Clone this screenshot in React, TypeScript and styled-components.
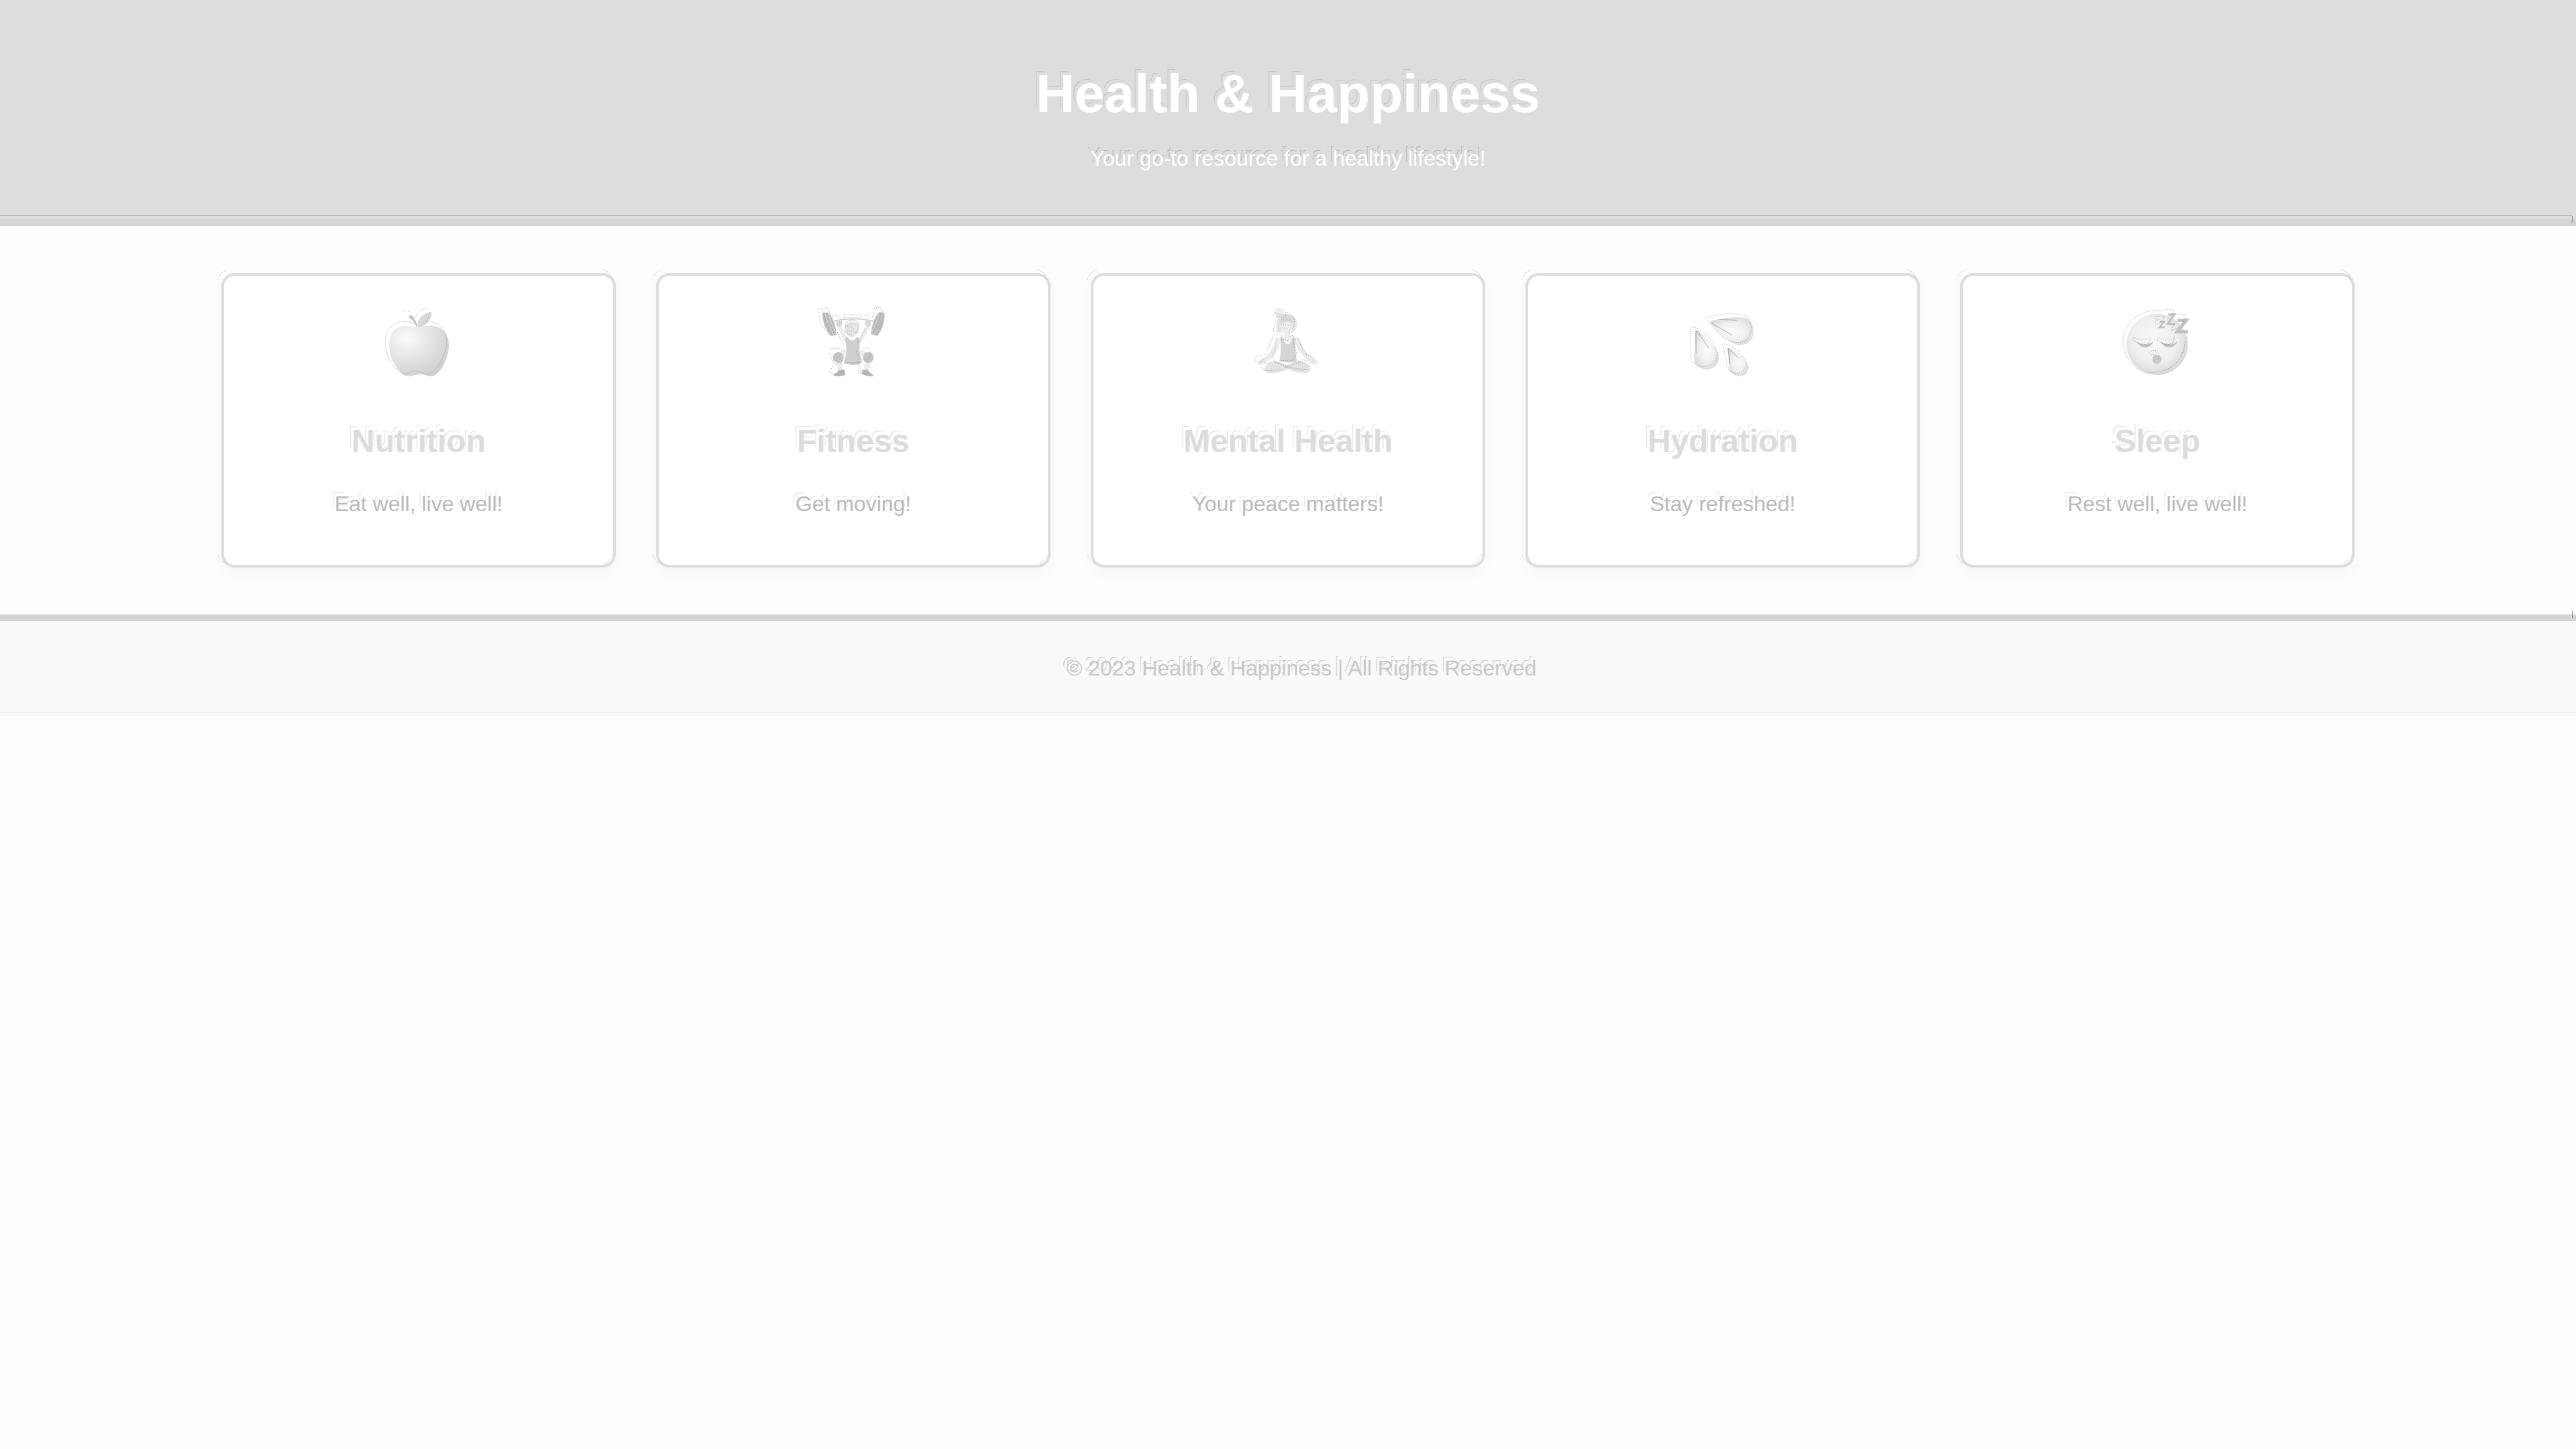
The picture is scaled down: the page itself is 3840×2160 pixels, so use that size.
import React from "react";
import styled, { createGlobalStyle, css } from "styled-components";

const GlobalStyle = createGlobalStyle`
  *, *::before, *::after { box-sizing: border-box; }
  body {
    margin: 0;
    background: #fdfdfd;
    color: #bababa;
    font-family: "Liberation Sans", Arial, sans-serif;
    font-size: 32px;
    line-height: 37px;
    text-align: center;
  }
`;

/* A thin contour up and to the left of the letters. */
const contour = (ground: string, line: string) => css`
  text-shadow: -4px -5px 0 ${ground}, -5px -6px 0 ${line};
`;

/* The short upright mark at the right end of a band's rule. */
const endMark = css`
  position: relative;
  &::after {
    content: "";
    position: absolute;
    right: 5px;
    width: 1px;
    height: 10px;
    background: #858585;
  }
`;

const Header = styled.header`
  ${endMark}
  padding: 94px 40px 72px;
  border-bottom: 10px solid #d4d4d4;
  background: linear-gradient(#adadad, #adadad) 0 calc(100% - 5px) / calc(100% - 6px) 1px no-repeat #ddd;
  background-origin: padding-box;
  color: #fff;
  &::after { bottom: -5px; }
`;

const Title = styled.h1`
  margin: 0 0 32px;
  font-size: 80px;
  line-height: 92px;
  ${contour("#ddd", "#c6c6c6")}
`;

const Tagline = styled.p`
  margin: 0;
  ${contour("#ddd", "#b8b8b8")}
`;

const Cards = styled.main`
  display: grid;
  grid-template-columns: repeat(5, minmax(0, 588px));
  justify-content: center;
  gap: 60px;
  padding: 70px 60px;
`;

const Card = styled.section`
  position: relative;
  padding: 40px;
  border: 4px solid #ddd;
  border-radius: 20px;
  background: #fff;
  box-shadow: 0 8px 20px rgba(0, 0, 0, 0.03);
  &::before {
    content: "";
    position: absolute;
    inset: -10px 0 0 -10px;
    border: 1px dotted #b4b4b4;
    border-radius: 20px;
    --c: linear-gradient(#000, #000);
    mask: var(--c) 0 0 / 16px 16px no-repeat, var(--c) 100% 0 / 16px 16px no-repeat,
      var(--c) 0 100% / 16px 16px no-repeat, var(--c) 100% 100% / 16px 16px no-repeat;
  }
`;

const Icon = styled.svg`
  display: block;
  width: 100px;
  height: 100px;
  margin: 11px auto 68px;
  overflow: visible;
`;

const CardTitle = styled.h2`
  margin: 0 0 48px;
  color: #dcdcdc;
  font-size: 48px;
  line-height: 55px;
  ${contour("#fff", "#dedede")}
`;

const CardText = styled.p`
  margin: 0 0 32px;
  ${contour("#fff", "#e2e2e2")}
`;

const Footer = styled.footer`
  ${endMark}
  padding: 52px 0 52px 40px;
  border-top: 10px solid #d4d4d4;
  background: linear-gradient(#f0f0f0, #f0f0f0) 0 calc(100% - 4px) / 100% 1px no-repeat #f9f9f9;
  color: #c8c8c8;
  ${contour("#f9f9f9", "#cacaca")}
  &::after { top: -15px; }
`;

const FooterText = styled.p`
  margin: 0;
`;

const ghost = { fill: "none", stroke: "#8c8c8c", strokeWidth: 3, strokeDasharray: "3 6" };

const Apple = () => (
  <Icon viewBox="102 66 300 300" aria-hidden="true">
    <defs>
      <radialGradient id="apple" cx="30%" cy="25%" r="90%">
        <stop offset="0" stopColor="#fafafa" />
        <stop offset="0.45" stopColor="#e4e4e4" />
        <stop offset="1" stopColor="#cacaca" />
      </radialGradient>
    </defs>
    <path d="M253 146C285 133 325 133 350 148C380 166 390 200 387 235C383 285 354 344 320 360C302 368 278 352 257 353C236 353 212 368 192 360C158 343 124 285 120 232C118 192 130 158 160 144C189 132 224 139 253 146Z" fill="url(#apple)" />
    <path d="M244 143C236 125 225 111 211 101C204 91 218 86 224 94C237 109 245 127 248 144Z" fill="#c2c2c2" />
    <path d="M247 142C245 112 265 80 310 75C315 108 286 140 247 146Z" fill="#d8d8d8" />
    <g {...ghost}>
      <path d="M232 127C202 115 150 113 128 140C108 161 102 185 104 222C108 280 144 337 183 352C204 354 221 340 239 339C258 339 278 355 301 350C344 326 372 267 377 219C378 173 363 126 307 119" />
      <path d="M190 76C187 69 204 67 210 78M217 119L224 126M236 102C248 77 265 59 299 59M301 78C299 95 291 110 280 118L291 121" />
    </g>
  </Icon>
);

const Lifter = () => (
  <Icon viewBox="126 66 300 300" aria-hidden="true">
    <path d="M190 116Q276 96 365 116" fill="none" stroke="#d2d2d2" strokeWidth="6" />
    <path d="M211 135L249 208M346 135L303 208" stroke="#ececec" strokeWidth="19" strokeLinecap="round" />
    <path d="M138 79L163 78C185 100 200 140 201 178L178 183C151 161 139 120 138 79Z" fill="#bcbcbc" />
    <path d="M415 79L390 76C372 97 357 139 355 174L382 182C407 157 418 116 415 79Z" fill="#bcbcbc" />
    <path d="M151 83C158 116 169 149 189 177M165 81C173 115 185 145 198 168M403 81C397 116 384 152 367 177M389 80C385 113 372 143 359 162" fill="none" stroke="#dedede" strokeWidth="3" />
    <path d="M246 252L210 273L219 337M306 252L342 273L335 337" fill="none" stroke="#eeeeee" strokeWidth="25" strokeLinejoin="round" />
    <circle cx="209" cy="279" r="24" fill="#c4c4c4" />
    <circle cx="343" cy="279" r="24" fill="#c4c4c4" />
    <ellipse cx="270" cy="149" rx="31" ry="38" fill="#e5e5e5" />
    <path d="M240 145C239 99 300 99 303 143C294 134 286 126 276 126C260 126 248 132 240 145Z" fill="#f2f2f2" stroke="#b5b5b5" strokeWidth="2" />
    <path d="M248 186C257 215 285 213 293 186L304 195C299 227 305 269 315 303C295 315 252 314 233 303C247 263 249 228 238 196Z" fill="#cecece" />
    <path d="M244 301Q275 305 303 301M251 190C258 210 281 210 290 191" fill="none" stroke="#b1b1b1" strokeWidth="3" />
    <circle cx="213" cy="126" r="14" fill="#d8d8d8" />
    <circle cx="341" cy="126" r="14" fill="#d8d8d8" />
    <path d="M211 334L237 333L241 356C225 363 202 364 187 359C190 347 206 350 211 334ZM340 332L316 334L314 351C328 361 348 364 367 362C362 348 345 349 340 332Z" fill="#b6b6b6" />
    <g {...ghost}>
      <path d="M159 55L120 64C121 109 142 149 164 176L179 173M161 58C169 71 172 91 185 104M140 70C147 112 160 140 187 164M181 92C205 88 218 95 218 108L239 110M233 88H311V101H234ZM324 89H342L349 103M369 59C383 50 403 55 407 71C399 119 386 149 366 171M361 96C368 80 369 66 385 58M399 86C392 119 379 148 362 165" />
      <path d="M236 158C246 174 259 181 275 175M249 138L277 149M249 159L278 162M298 150L287 168M205 165L230 226M330 147L301 214M171 245C188 229 221 238 232 255M169 259C171 281 184 284 188 300C189 319 222 307 226 296M318 237C340 233 358 245 353 271C344 292 321 294 308 281M297 299C300 325 317 339 300 345M183 319L169 345L203 355L236 333M298 347L330 353L357 330L344 315M292 190L307 237L289 251L306 280" />
    </g>
  </Icon>
);

const Yogi = () => (
  <Icon viewBox="120 66 300 300" aria-hidden="true">
    <circle cx="232" cy="82" r="21" fill="#eeeeee" />
    <path d="M225 101C240 75 292 77 307 108C315 139 304 161 285 172L228 166C213 157 218 119 225 101Z" fill="#e3e3e3" />
    <ellipse cx="265" cy="141" rx="29" ry="36" fill="#ededed" />
    <path d="M236 126C256 122 277 111 293 124C296 97 270 83 248 92C239 100 237 111 236 126Z" fill="#d9d9d9" />
    <path d="M228 202C211 246 194 278 150 300M311 202C324 246 349 276 390 299" fill="none" stroke="#eaeaea" strokeWidth="23" strokeLinecap="round" />
    <path d="M248 178H289L309 194L313 212H224L230 190Z" fill="#f1f1f1" />
    <path d="M235 192L249 190C251 230 286 227 289 191L306 193C299 230 305 263 310 298H231C239 258 239 226 235 192Z" fill="#d5d5d5" />
    <path d="M210 294C178 303 151 329 171 344C206 358 247 341 272 330C301 346 344 358 367 341C382 317 348 301 313 293L267 311Z" fill="#e4e4e4" />
    <path d="M207 302C238 300 266 329 354 332M327 302C295 304 282 319 251 325" fill="none" stroke="#c5c5c5" strokeWidth="3" />
    <g {...ghost}>
      <path d="M206 86C211 54 249 53 260 78C287 76 300 104 298 125M215 80L262 92M218 101C227 79 253 104 239 112M216 114L203 156L223 165L238 157M240 130L262 133M246 147L266 148M271 135L286 137M248 99L281 117L296 142L274 161V183M218 174C190 188 188 234 173 257C160 273 149 278 135 271L121 280L123 295L143 305L164 281M213 195V236L200 278M241 180L239 197L271 203L274 188L293 180L297 228L309 263L291 292H239" />
      <path d="M311 187C323 204 330 236 350 266L371 272L385 282V299L369 306L349 292L327 288M154 296L174 306L190 302L212 290L242 312L278 327M149 320C158 344 203 341 240 328M265 321L303 331L337 337L361 316L343 304L316 294M263 300H320" />
    </g>
  </Icon>
);

const Drops = () => (
  <Icon viewBox="114 66 300 300" aria-hidden="true">
    <defs>
      <radialGradient id="drop" cx="52%" cy="50%" r="55%">
        <stop offset="0" stopColor="#fbfbfb" />
        <stop offset="0.6" stopColor="#efefef" />
        <stop offset="1" stopColor="#dadada" />
      </radialGradient>
    </defs>
    <path d="M205 119C245 105 328 92 368 104C413 123 412 188 377 213C325 242 276 206 205 119Z" fill="url(#drop)" />
    <path d="M143 154C173 170 234 224 246 264C253 305 228 331 192 333C151 331 132 303 137 263C142 232 139 192 143 154Z" fill="url(#drop)" />
    <path d="M285 233C323 252 374 283 381 321C378 352 358 363 334 362C303 359 288 338 291 306Z" fill="url(#drop)" />
    <path d="M211 123L303 177M246 109L325 112M147 157L203 237M144 162L145 258M288 237L338 284M288 240L297 307" fill="none" stroke="#aaa" strokeWidth="3" strokeLinecap="round" />
    <g {...ghost}>
      <path d="M193 101C241 85 329 75 362 91C396 107 401 164 374 198C344 223 301 212 266 188L220 144L191 108" />
      <path d="M124 142C152 134 220 194 238 250C245 284 222 313 186 319C151 320 128 306 121 278C117 253 123 220 118 195L124 147" />
      <path d="M264 219C293 213 347 254 369 300C372 333 352 347 328 350C300 348 279 328 281 295L265 225" />
    </g>
  </Icon>
);

const Sleeper = () => (
  <Icon viewBox="108 66 300 300" aria-hidden="true">
    <defs>
      <radialGradient id="face" cx="45%" cy="43%" r="57%">
        <stop offset="0" stopColor="#f8f8f8" />
        <stop offset="0.65" stopColor="#efefef" />
        <stop offset="1" stopColor="#d8d8d8" />
      </radialGradient>
    </defs>
    <circle cx="257" cy="220" r="137" fill="url(#face)" />
    <path d="M166 208C186 223 218 222 239 207C235 223 220 234 203 234C185 233 171 223 166 208ZM274 208C294 223 326 222 347 207C343 223 327 234 311 234C293 233 279 223 274 208Z" fill="#c4c4c4" />
    <circle cx="256" cy="287" r="21" fill="#cacaca" />
    <g fill="none" stroke="#c0c0c0" strokeLinejoin="miter">
      <path d="M269 118H288L268 144H292" strokeWidth="8" />
      <path d="M307 87H333L304 129H335" strokeWidth="10" />
      <path d="M348 112H388L346 164H396" strokeWidth="14" />
    </g>
    <g {...ghost}>
      <path d="M274 69C187 61 125 111 106 183C97 256 143 322 192 341C222 352 265 346 292 335C348 316 379 262 382 205" />
      <path d="M148 198C148 185 158 187 164 196H215L227 187C232 198 218 222 195 221C171 221 161 209 148 198M256 198C258 184 266 187 272 196H323L334 187C339 200 324 221 303 221C280 221 266 210 256 198M219 263C226 243 258 242 265 264M230 269C239 259 253 267 264 273M247 296L265 281" />
      <path d="M248 94H288V103L264 128L248 134L249 119L265 108L248 105ZM284 69L292 65H329V80L303 106M331 85H384V101L362 131M352 145L322 158L325 142L342 121" />
    </g>
  </Icon>
);

const topics = [
  { title: "Nutrition", text: "Eat well, live well!", Picture: Apple },
  { title: "Fitness", text: "Get moving!", Picture: Lifter },
  { title: "Mental Health", text: "Your peace matters!", Picture: Yogi },
  { title: "Hydration", text: "Stay refreshed!", Picture: Drops },
  { title: "Sleep", text: "Rest well, live well!", Picture: Sleeper },
];

export default function App() {
  return (
    <>
      <GlobalStyle />
      <Header>
        <Title>Health &amp; Happiness</Title>
        <Tagline>Your go-to resource for a healthy lifestyle!</Tagline>
      </Header>
      <Cards>
        {topics.map(({ title, text, Picture }) => (
          <Card key={title}>
            <Picture />
            <CardTitle>{title}</CardTitle>
            <CardText>{text}</CardText>
          </Card>
        ))}
      </Cards>
      <Footer>
        <FooterText>© 2023 Health &amp; Happiness | All Rights Reserved</FooterText>
      </Footer>
    </>
  );
}
